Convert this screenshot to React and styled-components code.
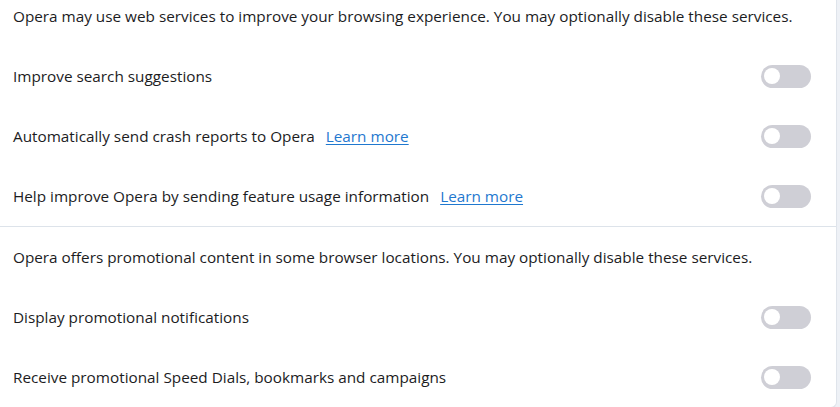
import React from "react";
import styled, { createGlobalStyle } from "styled-components";

const Global = createGlobalStyle`
  html, body { margin: 0; padding: 0; background: #eef1f6; }
  body { font-family: "Open Sans", "Noto Sans", sans-serif; overflow: hidden; }
`;

const Card = styled.div`
  margin-top: -14px;
  width: 836px;
  background: #ffffff;
  border-right: 1px solid #dfe4eb;
  border-bottom: 1px solid #dfe4eb;
  border-bottom-right-radius: 6px;
`;

const Section = styled.section`
  & + & {
    border-top: 1px solid #dde3ea;
  }
`;

const Row = styled.div`
  height: 60px;
  display: flex;
  align-items: center;
  justify-content: space-between;
  padding: 0 25px 0 13px;
  box-sizing: border-box;
  font-size: 15.3px;
  color: #1c1c1e;
`;

const Label = styled.span`
  display: flex;
  align-items: baseline;
  gap: 11px;
`;

const Link = styled.a`
  color: #1f78cf;
  text-decoration: underline;
  text-underline-offset: 2px;
  cursor: pointer;
`;

const Track = styled.span`
  width: 50px;
  height: 23px;
  border-radius: 12px;
  background: #cfcfd6;
  display: flex;
  align-items: center;
  padding: 0 3px;
  box-sizing: border-box;
`;

const Knob = styled.span`
  width: 16px;
  height: 16px;
  border-radius: 50%;
  background: #ffffff;
`;

const Toggle = () => (
  <Track role="switch" aria-checked="false">
    <Knob />
  </Track>
);

const Setting = ({ label, link }) => (
  <Row>
    <Label>
      {label}
      {link && <Link>{link}</Link>}
    </Label>
    <Toggle />
  </Row>
);

export default function App() {
  return (
    <>
      <Global />
      <Card>
        <Section>
          <Row>
            Opera may use web services to improve your browsing experience. You may optionally disable these services.
          </Row>
          <Setting label="Improve search suggestions" />
          <Setting label="Automatically send crash reports to Opera" link="Learn more" />
          <Setting label="Help improve Opera by sending feature usage information" link="Learn more" />
        </Section>
        <Section>
          <Row>
            Opera offers promotional content in some browser locations. You may optionally disable these services.
          </Row>
          <Setting label="Display promotional notifications" />
          <Setting label="Receive promotional Speed Dials, bookmarks and campaigns" />
        </Section>
      </Card>
    </>
  );
}
